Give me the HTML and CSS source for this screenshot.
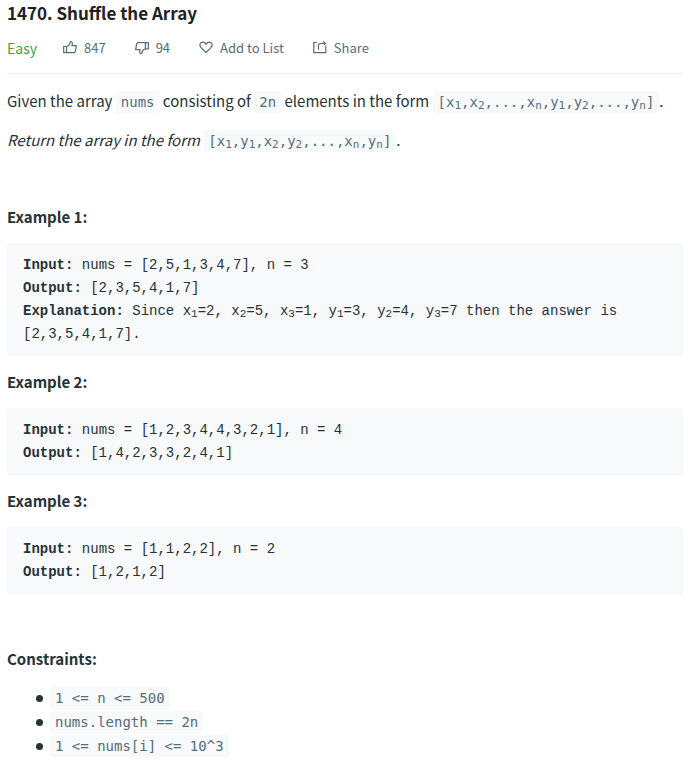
FILE: index.html
```html
<!DOCTYPE html>
<html lang="en">
<head>
<meta charset="utf-8">
<meta name="viewport" content="width=device-width, initial-scale=1">
<title>1470. Shuffle the Array</title>
<link rel="stylesheet" href="styles.css">
</head>
<body>
<main class="question">
  <header class="header">
    <h1 class="title">1470. Shuffle the Array</h1>
    <div class="meta">
      <span class="difficulty">Easy</span>
      <button class="action" type="button" aria-label="Like, 847"><svg class="icon" viewBox="0 0 14 14"><path d="M.7 5.500h2.900v6.200H.7zM3.600 5.500C6 4.800 7 3.500 7.200.8c1.500-.5 2.300.7 2.100 2L9 4.700h4.300l-.8 5.300-1.200 1.700H3.600"/></svg><span>847</span></button>
      <button class="action" type="button" aria-label="Dislike, 94"><svg class="icon flipped" viewBox="0 0 14 14"><path d="M.7 6.200h2.900v6.200H.7zM3.600 6.200C6 5.500 7 4.200 7.200 1.500c1.500-.5 2.300.7 2.100 2L9 5.400h4.300l-.8 5.300-1.200 1.700H3.600"/></svg><span>94</span></button>
      <button class="action" type="button"><svg class="icon" viewBox="0 0 14 14"><path d="M7 11.500 2 6.600C-.2 3.900 1.300 1.200 3.700 1.200 5.200 1.200 6.400 2 7 3.200 7.600 2 8.800 1.200 10.300 1.200 12.700 1.200 14.200 3.900 12 6.600Z"/></svg><span>Add to List</span></button>
      <button class="action" type="button"><svg class="icon" viewBox="0 0 14 14"><path d="M4 1.500H.8v10.200h12V4.500M5.500 8.800V4.500Q5.500 2.500 7.500 2.500H12M10.300.5l2 2-1.300 1.300"/></svg><span>Share</span></button>
    </div>
  </header>

  <section class="content">
    <p>Given the array <code>nums</code> consisting of <code>2n</code> elements in the form <code>[x<sub>1</sub>,x<sub>2</sub>,...,x<sub>n</sub>,y<sub>1</sub>,y<sub>2</sub>,...,y<sub>n</sub>]</code>.</p>
    <p><em>Return the array in the form</em> <code>[x<sub>1</sub>,y<sub>1</sub>,x<sub>2</sub>,y<sub>2</sub>,...,x<sub>n</sub>,y<sub>n</sub>]</code>.</p>
    <p class="label">&nbsp;</p>
    <p class="label"><strong>Example 1:</strong></p>
<pre><strong>Input:</strong> nums = [2,5,1,3,4,7], n = 3
<strong>Output:</strong> [2,3,5,4,1,7]
<strong>Explanation:</strong> Since x<sub>1</sub>=2, x<sub>2</sub>=5, x<sub>3</sub>=1, y<sub>1</sub>=3, y<sub>2</sub>=4, y<sub>3</sub>=7 then the answer is [2,3,5,4,1,7].</pre>
    <p class="label"><strong>Example 2:</strong></p>
<pre><strong>Input:</strong> nums = [1,2,3,4,4,3,2,1], n = 4
<strong>Output:</strong> [1,4,2,3,3,2,4,1]</pre>
    <p class="label"><strong>Example 3:</strong></p>
<pre><strong>Input:</strong> nums = [1,1,2,2], n = 2
<strong>Output:</strong> [1,2,1,2]</pre>
    <p>&nbsp;</p>
    <p><strong>Constraints:</strong></p>
    <ul>
      <li><code>1 &lt;= n &lt;= 500</code></li>
      <li><code>nums.length == 2n</code></li>
      <li><code>1 &lt;= nums[i] &lt;= 10^3</code></li>
    </ul>
  </section>
</main>
</body>
</html>
```
FILE: styles.css
```css
* { box-sizing: border-box; }

body {
  margin: 0;
  background: #fff;
  color: #263238;
  font: 15px/24px "Noto Sans CJK SC", "Open Sans", sans-serif;
}

.question { padding: 1px 13px 0 7px; }

.header {
  padding-bottom: 13px;
  border-bottom: 1px solid #eee;
}

.title {
  margin: 0 0 11px;
  color: #212121;
  font-size: 17px;
  line-height: 24px;
}

.meta {
  display: flex;
  align-items: center;
  gap: 29px;
  font-size: 13px;
  line-height: 24px;
}

.difficulty {
  margin-right: -3px;
  color: #43a047;
  font-size: 14px;
}

.action {
  display: flex;
  align-items: center;
  gap: 7px;
  padding: 0;
  border: 0;
  background: none;
  color: #546e7a;
  font: inherit;
}

.icon {
  width: 14px;
  height: 14px;
  fill: none;
  stroke: currentColor;
  stroke-width: 1.2;
}

.flipped { transform: rotate(180deg); }

.content { padding-top: 15px; }

p { margin: 0 0 15px; }

.label { margin-bottom: 14px; }

code {
  padding: 3px 5px;
  border-radius: 3px;
  background: #f7f9fa;
  color: #546e7a;
  font: 14px "DejaVu Sans Mono", monospace;
}

sub {
  position: relative;
  bottom: -2px;
  font-size: 11px;
  line-height: 0;
  vertical-align: baseline;
}

pre {
  margin: 0 0 14px;
  padding: 11px 16px 10px;
  border-radius: 3px;
  background: #f7f9fa;
  font: 14px/23px "Liberation Mono", monospace;
  white-space: pre-wrap;
}

ul {
  margin: 0;
  padding-left: 29px;
  list-style: none;
}

li {
  display: flex;
  align-items: center;
  gap: 7px;
  min-height: 24px;
}

li::before {
  content: "";
  width: 7px;
  height: 7px;
  border-radius: 50%;
  background: currentColor;
}
```
